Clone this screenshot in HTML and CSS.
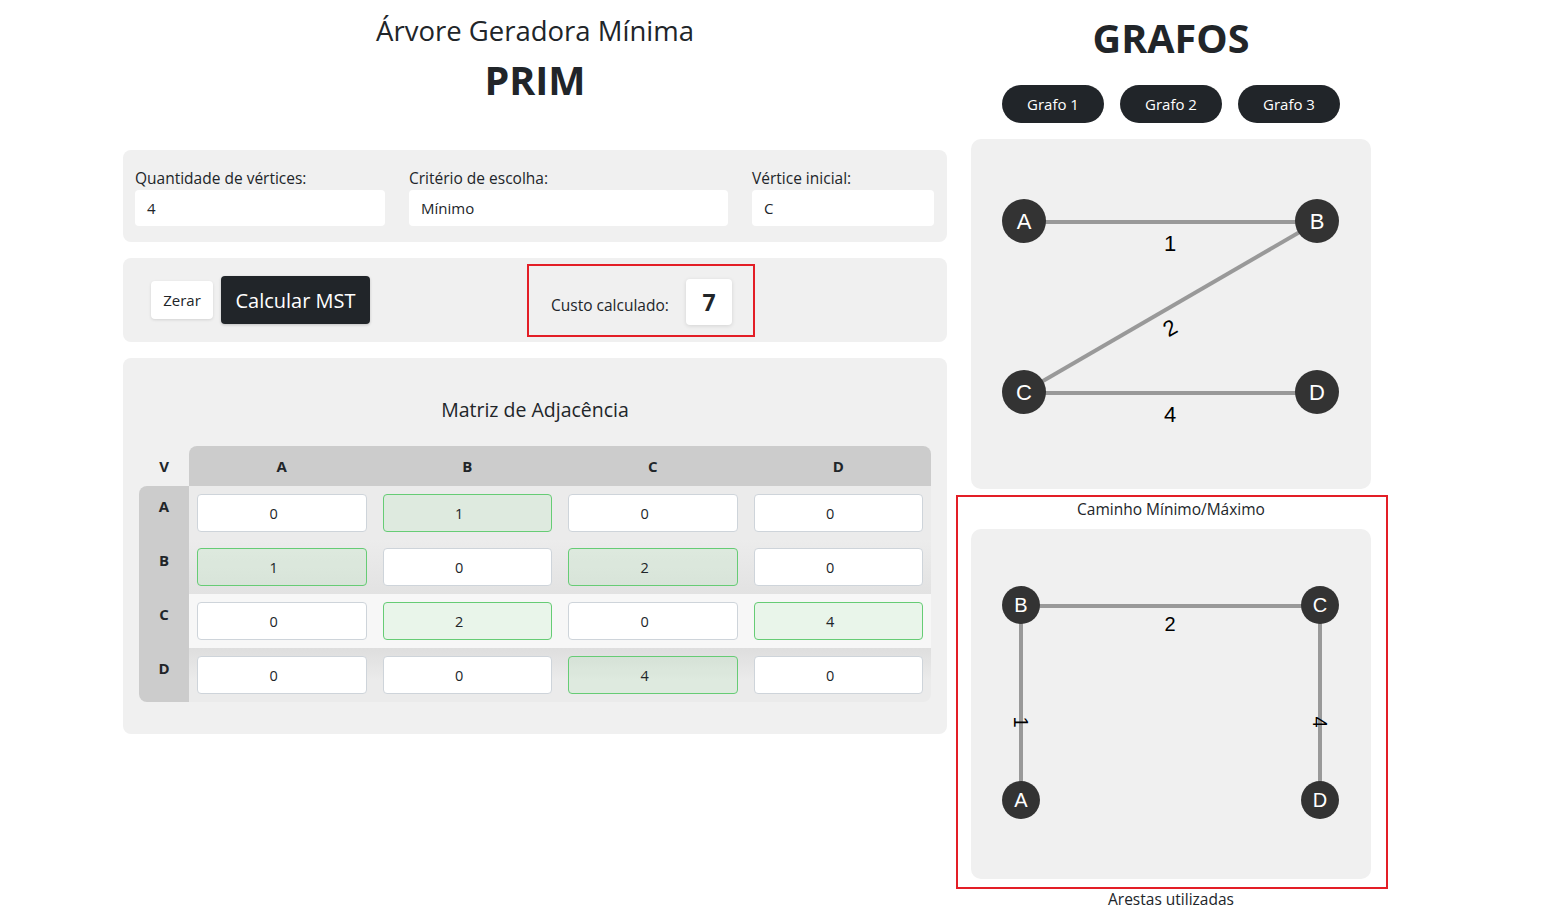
FILE: index.html
```html
<!DOCTYPE html>
<html lang="pt-BR">
<head>
<meta charset="utf-8">
<title>Árvore Geradora Mínima - PRIM</title>
<link rel="stylesheet" href="styles.css">
</head>
<body>
<div class="page">
  <main class="left">
    <header class="head">
      <h2 class="subtitle">Árvore Geradora Mínima</h2>
      <h1 class="title">PRIM</h1>
    </header>

    <section class="card params">
      <div class="field">
        <label class="label">Quantidade de vértices:</label>
        <div class="input">4</div>
      </div>
      <div class="field">
        <label class="label">Critério de escolha:</label>
        <div class="input">Mínimo</div>
      </div>
      <div class="field">
        <label class="label">Vértice inicial:</label>
        <div class="input">C</div>
      </div>
    </section>

    <section class="card actions">
      <div class="btns">
        <button class="btn btn-light">Zerar</button>
        <button class="btn btn-dark">Calcular MST</button>
      </div>
      <div class="cost">
        <span class="cost-label">Custo calculado:</span>
        <span class="cost-value">7</span>
      </div>
    </section>

    <section class="card matrix">
      <h3 class="matrix-title">Matriz de Adjacência</h3>
      <table class="adj">
        <thead>
          <tr>
            <th class="corner">V</th>
            <th class="colh first">A</th>
            <th class="colh">B</th>
            <th class="colh">C</th>
            <th class="colh last">D</th>
          </tr>
        </thead>
        <tbody>
          <tr class="row-a">
            <th class="rowh first">A</th>
            <td><div class="cell">0</div></td>
            <td><div class="cell on">1</div></td>
            <td><div class="cell">0</div></td>
            <td><div class="cell">0</div></td>
          </tr>
          <tr class="row-b">
            <th class="rowh">B</th>
            <td><div class="cell on">1</div></td>
            <td><div class="cell">0</div></td>
            <td><div class="cell on">2</div></td>
            <td><div class="cell">0</div></td>
          </tr>
          <tr class="row-c">
            <th class="rowh">C</th>
            <td><div class="cell">0</div></td>
            <td><div class="cell on">2</div></td>
            <td><div class="cell">0</div></td>
            <td><div class="cell on">4</div></td>
          </tr>
          <tr class="row-d">
            <th class="rowh last">D</th>
            <td><div class="cell">0</div></td>
            <td><div class="cell">0</div></td>
            <td><div class="cell on">4</div></td>
            <td class="lastcell"><div class="cell">0</div></td>
          </tr>
        </tbody>
      </table>
    </section>
  </main>

  <aside class="right">
    <h1 class="grafos">GRAFOS</h1>
    <div class="tabs">
      <button class="pill">Grafo 1</button>
      <button class="pill">Grafo 2</button>
      <button class="pill">Grafo 3</button>
    </div>

    <div class="graph-box">
      <svg class="graph" width="400" height="350" viewBox="0 0 400 350">
        <g class="edges">
          <line x1="53" y1="83" x2="346" y2="83"/>
          <line x1="53" y1="253" x2="346" y2="83"/>
          <line x1="53" y1="254" x2="346" y2="254"/>
        </g>
        <g class="elabels big">
          <text x="199" y="104">1</text>
          <text x="199" y="189" transform="rotate(-30 199 189)">2</text>
          <text x="199" y="275">4</text>
        </g>
        <g class="nodes big">
          <circle cx="53" cy="82" r="22"/><text x="53" y="82">A</text>
          <circle cx="346" cy="82" r="22"/><text x="346" y="82">B</text>
          <circle cx="53" cy="253" r="22"/><text x="53" y="253">C</text>
          <circle cx="346" cy="253" r="22"/><text x="346" y="253">D</text>
        </g>
      </svg>
    </div>

    <div class="result">
      <p class="result-title">Caminho Mínimo/Máximo</p>
      <div class="graph-box">
        <svg class="graph" width="400" height="350" viewBox="0 0 400 350">
          <g class="edges">
            <line x1="50" y1="77" x2="349" y2="77"/>
            <line x1="50" y1="76" x2="50" y2="271"/>
            <line x1="349" y1="76" x2="349" y2="271"/>
          </g>
          <g class="elabels">
            <text x="199" y="95">2</text>
            <text x="50" y="193" transform="rotate(90 50 193)">1</text>
            <text x="349" y="193" transform="rotate(90 349 193)">4</text>
          </g>
          <g class="nodes">
            <circle cx="50" cy="76" r="19"/><text x="50" y="76">B</text>
            <circle cx="349" cy="76" r="19"/><text x="349" y="76">C</text>
            <circle cx="50" cy="271" r="19"/><text x="50" y="271">A</text>
            <circle cx="349" cy="271" r="19"/><text x="349" y="271">D</text>
          </g>
        </svg>
      </div>
    </div>
    <p class="caption">Arestas utilizadas</p>
  </aside>
</div>
</body>
</html>
```

FILE: styles.css
```css
* { box-sizing: border-box; }

body {
  margin: 0;
  background: #ffffff;
  color: #212529;
  font-family: "Open Sans", "Noto Sans", sans-serif;
  font-size: 15.5px;
}

.page {
  display: flex;
  align-items: flex-start;
  gap: 24px;
  padding-left: 123px;
}

/* ---------- left column ---------- */
.left {
  width: 824px;
  display: flex;
  flex-direction: column;
}

.head { text-align: center; }

.subtitle {
  margin: 14px 0 0;
  font-size: 27.5px;
  line-height: 34px;
  font-weight: 500;
}

.title {
  margin: 8px 0 0;
  font-size: 39.5px;
  line-height: 48px;
  font-weight: 700;
}

.card {
  background: #f0f0f0;
  border-radius: 8px;
}

.params {
  margin-top: 46px;
  padding: 18px 13px 16px 12px;
  display: grid;
  grid-template-columns: 250px 319px 1fr;
  gap: 24px;
}

.label {
  display: block;
  font-size: 15.5px;
  line-height: 20px;
  margin-bottom: 2px;
}

.input {
  height: 36px;
  background: #ffffff;
  border-radius: 4px;
  padding: 0 12px;
  display: flex;
  align-items: center;
  font-size: 15px;
}

.actions {
  margin-top: 16px;
  height: 84px;
  display: flex;
  align-items: center;
  padding-left: 28px;
}

.btns {
  display: flex;
  align-items: center;
  gap: 8px;
}

.btn {
  border: 0;
  font-family: inherit;
  border-radius: 4px;
  cursor: pointer;
}

.btn-light {
  height: 38px;
  width: 62px;
  padding: 0;
  background: #ffffff;
  color: #212529;
  font-size: 15px;
  box-shadow: 0 1px 3px rgba(0,0,0,0.12);
}

.btn-dark {
  height: 48px;
  width: 149px;
  padding: 0;
  background: #212529;
  color: #ffffff;
  font-size: 20px;
  box-shadow: 0 1px 3px rgba(0,0,0,0.2);
}

.cost {
  margin-left: 157px;
  width: 228px;
  border: 2px solid #e31e26;
  padding: 13px 21px 10px 22px;
  display: flex;
  align-items: center;
  justify-content: space-between;
}

.cost-label {
  font-size: 15.5px;
  margin-top: 6px;
}

.cost-value {
  width: 46px;
  height: 46px;
  background: #ffffff;
  border-radius: 4px;
  box-shadow: 0 1px 4px rgba(0,0,0,0.12);
  display: flex;
  align-items: center;
  justify-content: center;
  font-size: 23px;
  font-weight: 700;
}

.matrix {
  margin-top: 16px;
  padding: 40px 16px 32px;
}

.matrix-title {
  margin: 0 0 24px;
  text-align: center;
  font-size: 19.5px;
  line-height: 24px;
  font-weight: 500;
}

.adj {
  width: 792px;
  border-collapse: separate;
  border-spacing: 0;
  table-layout: fixed;
}

.adj th {
  font-size: 15px;
  font-weight: 700;
  text-align: center;
}

.corner { width: 50px; height: 40px; }

.colh { background: #cccccc; height: 40px; }
.colh.first { border-top-left-radius: 8px; }
.colh.last { border-top-right-radius: 8px; }

.rowh {
  background: #cccccc;
  vertical-align: top;
  padding-top: 10px;
  line-height: 20px;
}
.rowh.first { border-top-left-radius: 8px; }
.rowh.last { border-bottom-left-radius: 8px; }

.adj td { padding: 8px; height: 54px; }

.row-a td { background: #ebebeb; }
.row-b td { background: linear-gradient(#ececec, #e2e2e2); }
.row-c td { background: #f7f7f7; }
.row-d td { background: linear-gradient(#dedede, #ebebeb 60%); }
.adj td.lastcell { border-bottom-right-radius: 8px; }

.cell {
  height: 38px;
  border: 1px solid #ced4da;
  border-radius: 4px;
  background: #ffffff;
  display: flex;
  align-items: center;
  justify-content: center;
  padding: 0 18px 0 2px;
  font-size: 14.5px;
}

.cell.on {
  background: rgba(130, 230, 140, 0.12);
  border-color: #66cc75;
}

/* ---------- right column ---------- */
.right {
  width: 400px;
  display: flex;
  flex-direction: column;
}

.grafos {
  margin: 14px 0 0;
  text-align: center;
  font-size: 39.5px;
  line-height: 48px;
  font-weight: 700;
}

.tabs {
  margin-top: 23px;
  display: flex;
  justify-content: center;
  gap: 16px;
}

.pill {
  width: 102px;
  height: 38px;
  border: 0;
  border-radius: 19px;
  background: #212529;
  color: #ffffff;
  font-family: inherit;
  font-size: 15px;
}

.graph-box {
  margin-top: 16px;
  width: 400px;
  height: 350px;
  background: #f0f0f0;
  border-radius: 10px;
}

.graph { display: block; }

.edges line {
  stroke: #999999;
  stroke-width: 4;
}

.elabels text {
  font-family: "Liberation Sans", Arial, sans-serif;
  font-size: 20px;
  fill: #000000;
  text-anchor: middle;
  dominant-baseline: central;
}

.nodes circle { fill: #333333; }

.nodes text {
  font-family: "Liberation Sans", Arial, sans-serif;
  font-size: 20px;
  fill: #ffffff;
  text-anchor: middle;
  dominant-baseline: central;
}

.nodes.big text { font-size: 22px; }
.elabels.big text { font-size: 22px; }

.result {
  margin: 6px -17px 0 -15px;
  border: 2px solid #e31e26;
  padding: 2px 15px 8px 13px;
}

.result-title {
  margin: 0;
  text-align: center;
  font-size: 15.5px;
  line-height: 20px;
}

.result .graph-box { margin-top: 10px; }

.caption {
  margin: 0;
  text-align: center;
  font-size: 15.5px;
  line-height: 20px;
}
```
